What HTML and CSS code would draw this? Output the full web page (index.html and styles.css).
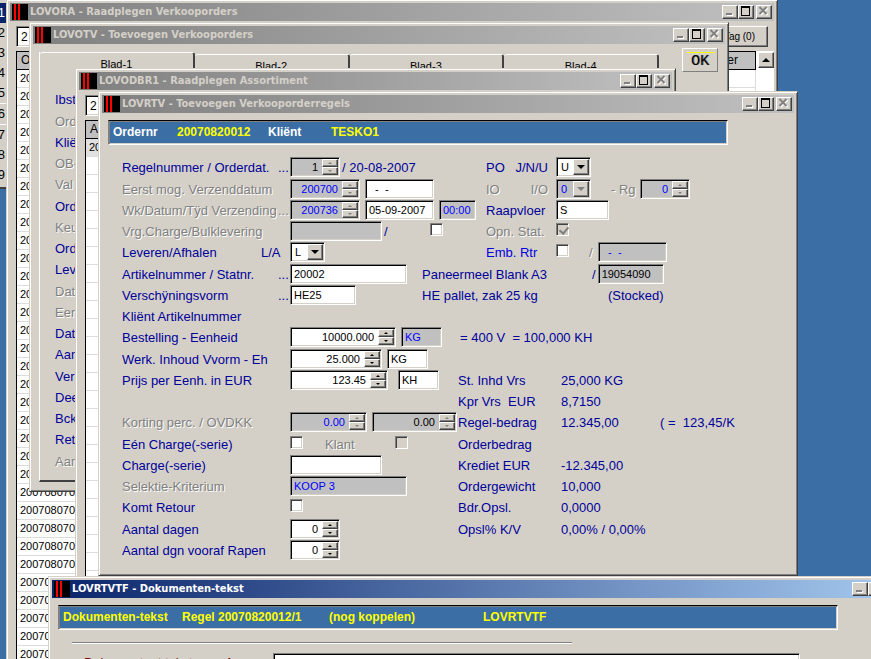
FILE: index.html
```html
<!DOCTYPE html>
<html lang="nl">
<head>
  <meta charset="UTF-8"/>
  <meta name="viewport" content="width=device-width, initial-scale=1.0"/>
  <title>LOVRTV - Toevoegen Verkooporderregels</title>
  <link rel="stylesheet" href="styles.css">
</head>
<body>
<div class="desktop">

  <!-- Menu strip on the left edge -->
  <ol class="menu">
    <li class="active">1</li>
    <li>2</li>
    <li>3</li>
    <li>4</li>
    <li>5</li>
    <li class="sep">6</li>
    <li class="sep">7</li>
    <li>8</li>
    <li>9</li>
  </ol>

  <!-- LOVORA -->
  <section class="window win-orders">
    <header class="titlebar">
      <span class="logo"></span>
      <h2>LOVORA - Raadplegen Verkooporders</h2>
      <div class="winbtns">
        <button type="button" aria-label="Min" disabled><svg width="12" height="10"><path d="M4 8h6v2h-6z" fill="#fff"/><path d="M3 7h6v2h-6z" fill="#808080"/></svg></button>
        <button type="button" aria-label="Max"><svg width="12" height="10"><path d="M2 0h9v10h-9z M3 2v7h7v-7z" fill="#000" fill-rule="evenodd"/></svg></button>
        <button type="button" aria-label="Sluiten" disabled><svg width="12" height="10"><path d="M3.5 2l7 7M10.5 2l-7 7" stroke="#fff" stroke-width="2"/><path d="M2.5 1l7 7M9.5 1l-7 7" stroke="#808080" stroke-width="2"/></svg></button>
      </div>
    </header>
    <div class="toolbar">
      <input class="field search" type="text" value="2" aria-label="Zoek order">
      <button type="button" class="tag">Tag (0)</button>
    </div>
    <div class="list">
      <table class="orders">
        <thead><tr><th>Order</th><th class="last">Order</th></tr></thead>
        <tbody>
          <tr><td>200708070001</td><td></td></tr>
          <tr><td>200708070001</td><td></td></tr>
          <tr><td>200708070001</td><td></td></tr>
          <tr><td>200708070001</td><td></td></tr>
          <tr><td>200708070001</td><td></td></tr>
          <tr><td>200708070001</td><td></td></tr>
          <tr><td>200708070001</td><td></td></tr>
          <tr><td>200708070001</td><td></td></tr>
          <tr><td>200708070001</td><td></td></tr>
          <tr><td>200708070001</td><td></td></tr>
          <tr><td>200708070001</td><td></td></tr>
          <tr><td>200708070001</td><td></td></tr>
          <tr><td>200708070001</td><td></td></tr>
          <tr><td>200708070001</td><td></td></tr>
          <tr><td>200708070001</td><td></td></tr>
          <tr><td>200708070001</td><td></td></tr>
          <tr><td>200708070001</td><td></td></tr>
          <tr><td>200708070001</td><td></td></tr>
          <tr><td>200708070001</td><td></td></tr>
          <tr><td>200708070001</td><td></td></tr>
          <tr><td>200708070001</td><td></td></tr>
          <tr><td>200708070001</td><td></td></tr>
          <tr><td>200708070001</td><td></td></tr>
          <tr><td>200708070001</td><td></td></tr>
          <tr><td>200708070001</td><td></td></tr>
          <tr><td>200708070001</td><td></td></tr>
          <tr><td>200708070001</td><td></td></tr>
          <tr><td>200708070001</td><td></td></tr>
          <tr><td>200708070001</td><td></td></tr>
          <tr><td>200708070001</td><td></td></tr>
          <tr><td>200708070001</td><td></td></tr>
          <tr><td>200708070001</td><td></td></tr>
          <tr><td>200708070001</td><td></td></tr>
        </tbody>
      </table>
      <div class="scrollbar"><button type="button" aria-label="Omhoog"><svg width="14" height="14"><path d="M7 5l4 4h-8z"/></svg></button></div>
    </div>
  </section>

  <!-- LOVOTV -->
  <section class="window win-order">
    <header class="titlebar">
      <span class="logo"></span>
      <h2>LOVOTV - Toevoegen Verkooporders</h2>
      <div class="winbtns">
        <button type="button" aria-label="Min" disabled><svg width="12" height="10"><path d="M4 8h6v2h-6z" fill="#fff"/><path d="M3 7h6v2h-6z" fill="#808080"/></svg></button>
        <button type="button" aria-label="Max"><svg width="12" height="10"><path d="M2 0h9v10h-9z M3 2v7h7v-7z" fill="#000" fill-rule="evenodd"/></svg></button>
        <button type="button" aria-label="Sluiten" disabled><svg width="12" height="10"><path d="M3.5 2l7 7M10.5 2l-7 7" stroke="#fff" stroke-width="2"/><path d="M2.5 1l7 7M9.5 1l-7 7" stroke="#808080" stroke-width="2"/></svg></button>
      </div>
    </header>
    <div class="order-body">
      <div class="tabpane">
        <nav class="tabs">
          <button type="button" class="current">Blad-1</button>
          <button type="button">Blad-2</button>
          <button type="button">Blad-3</button>
          <button type="button">Blad-4</button>
        </nav>
        <ul class="labels">
          <li>Ibst</li>
          <li class="off">Ord</li>
          <li>Klië</li>
          <li class="off">OB-</li>
          <li class="off">Val</li>
          <li>Ord</li>
          <li class="off">Keu</li>
          <li>Ord</li>
          <li>Lev</li>
          <li class="off">Dat</li>
          <li class="off">Eer</li>
          <li>Dat</li>
          <li>Aan</li>
          <li>Ver</li>
          <li>Dee</li>
          <li>Bck</li>
          <li>Ret</li>
          <li class="off">Aan</li>
        </ul>
      </div>
      <button type="button" class="ok">OK</button>
    </div>
  </section>

  <!-- LOVODBR1 -->
  <section class="window win-stock">
    <header class="titlebar">
      <span class="logo"></span>
      <h2>LOVODBR1 - Raadplegen Assortiment</h2>
      <div class="winbtns">
        <button type="button" aria-label="Min" disabled><svg width="12" height="10"><path d="M4 8h6v2h-6z" fill="#fff"/><path d="M3 7h6v2h-6z" fill="#808080"/></svg></button>
        <button type="button" aria-label="Max"><svg width="12" height="10"><path d="M2 0h9v10h-9z M3 2v7h7v-7z" fill="#000" fill-rule="evenodd"/></svg></button>
        <button type="button" aria-label="Sluiten" disabled><svg width="12" height="10"><path d="M3.5 2l7 7M10.5 2l-7 7" stroke="#fff" stroke-width="2"/><path d="M2.5 1l7 7M9.5 1l-7 7" stroke="#808080" stroke-width="2"/></svg></button>
      </div>
    </header>
    <div class="toolbar">
      <input class="field search" type="text" value="2" aria-label="Zoek artikel">
    </div>
    <div class="list empty">
      <table class="orders">
        <thead><tr><th>Art</th></tr></thead>
        <tbody><tr class="selected"><td>20</td></tr></tbody>
      </table>
    </div>
  </section>

  <!-- LOVRTV -->
  <section class="window win-line">
    <header class="titlebar">
      <span class="logo"></span>
      <h2>LOVRTV - Toevoegen Verkooporderregels</h2>
      <div class="winbtns">
        <button type="button" aria-label="Min" disabled><svg width="12" height="10"><path d="M4 8h6v2h-6z" fill="#fff"/><path d="M3 7h6v2h-6z" fill="#808080"/></svg></button>
        <button type="button" aria-label="Max"><svg width="12" height="10"><path d="M2 0h9v10h-9z M3 2v7h7v-7z" fill="#000" fill-rule="evenodd"/></svg></button>
        <button type="button" aria-label="Sluiten" disabled><svg width="12" height="10"><path d="M3.5 2l7 7M10.5 2l-7 7" stroke="#fff" stroke-width="2"/><path d="M2.5 1l7 7M9.5 1l-7 7" stroke="#808080" stroke-width="2"/></svg></button>
      </div>
    </header>
    <div class="infobar order-info">
      <b class="white">Ordernr</b><b>20070820012</b><b class="white">Kliënt</b><b>TESKO1</b>
    </div>

    <form class="form">
      <div class="row head">
        <label for="regel">Regelnummer / Orderdat. <i>...</i></label>
        <div class="cell">
          <span class="field spin w50 off"><input id="regel" value="1" disabled><span class="arrows"><button type="button" class="up" aria-label="+" disabled></button><button type="button" class="down" aria-label="-" disabled></button></span></span>
          <span class="after">/ 20-08-2007</span>
        </div>
        <label for="po">PO <span>J/N/U</span></label>
        <div class="cell"><span class="field combo"><select id="po"><option>U</option></select><span class="drop"></span></span></div>
      </div>
      <div class="row head">
        <label class="off" for="eerst">Eerst mog. Verzenddatum</label>
        <div class="cell g5">
          <span class="field spin w70 off blue"><input id="eerst" value="200700" disabled><span class="arrows"><button type="button" class="up" aria-label="+" disabled></button><button type="button" class="down" aria-label="-" disabled></button></span></span>
          <input class="field w69" type="text" value="  -  -" aria-label="Datum">
        </div>
        <label class="off" for="io">IO <span>I/O</span></label>
        <div class="cell">
          <span class="field combo off blue"><select id="io" disabled><option>0</option></select><span class="drop"></span></span>
          <label class="off rg" for="rg">- Rg</label>
          <span class="field spin w50 off blue"><input id="rg" value="0" disabled><span class="arrows"><button type="button" class="up" aria-label="+" disabled></button><button type="button" class="down" aria-label="-" disabled></button></span></span>
        </div>
      </div>
      <div class="row head">
        <label class="off" for="week">Wk/Datum/Tÿd Verzending <i>...</i></label>
        <div class="cell g5">
          <span class="field spin w70 off blue"><input id="week" value="200736" disabled><span class="arrows"><button type="button" class="up" aria-label="+" disabled></button><button type="button" class="down" aria-label="-" disabled></button></span></span>
          <input class="field w69" type="text" value="05-09-2007" aria-label="Datum">
          <input class="field w37 off blue" type="text" value="00:00" aria-label="Tijd" disabled>
        </div>
        <label for="vloer">Raapvloer</label>
        <div class="cell"><input class="field w53" type="text" id="vloer" value="S"></div>
      </div>
      <div class="row head">
        <label class="off" for="vrg">Vrg.Charge/Bulklevering</label>
        <div class="cell bulk">
          <input class="field w92 off" type="text" id="vrg" disabled>
          <span class="after">/</span>
          <input type="checkbox" aria-label="Bulklevering">
        </div>
        <label class="off" for="opn">Opn. Stat.</label>
        <div class="cell"><input type="checkbox" id="opn" checked disabled></div>
      </div>
      <div class="row head">
        <label for="la">Leveren/Afhalen <span class="la">L/A</span></label>
        <div class="cell"><span class="field combo"><select id="la"><option>L</option></select><span class="drop"></span></span></div>
        <label class="bright" for="emb">Emb. Rtr</label>
        <div class="cell">
          <input type="checkbox" id="emb">
          <span class="off slash">/</span>
          <input class="field w69 off blue" type="text" value="  -  -" aria-label="Retourdatum" disabled>
        </div>
      </div>
      <div class="row article">
        <label for="art">Artikelnummer / Statnr. <i>...</i></label>
        <div class="cell"><input class="field w117" type="text" id="art" value="20002"></div>
        <span>Paneermeel Blank A3</span>
        <div class="cell stat">
          <span class="after">/</span>
          <input class="field w66 off" type="text" value="19054090" aria-label="Statnr" disabled>
        </div>
      </div>
      <div class="row article">
        <label for="vorm">Verschÿningsvorm <i>...</i></label>
        <div class="cell"><input class="field w66" type="text" id="vorm" value="HE25"></div>
        <span>HE pallet, zak 25 kg</span>
        <span class="stocked">(Stocked)</span>
      </div>
      <div class="row">
        <span>Kliënt Artikelnummer</span>
      </div>
      <div class="row totals">
        <label for="bestel">Bestelling - Eenheid</label>
        <div class="cell g5">
          <span class="field spin w106"><input id="bestel" value="10000.000"><span class="arrows"><button type="button" class="up" aria-label="+"></button><button type="button" class="down" aria-label="-"></button></span></span>
          <input class="field w41 off blue" type="text" value="KG" aria-label="Eenheid" disabled>
        </div>
        <span class="pre wide">= 400 V  = 100,000 KH</span>
      </div>
      <div class="row totals">
        <label for="inhoud">Werk. Inhoud Vvorm - Eh</label>
        <div class="cell g5">
          <span class="field spin w92"><input id="inhoud" value="25.000"><span class="arrows"><button type="button" class="up" aria-label="+"></button><button type="button" class="down" aria-label="-"></button></span></span>
          <input class="field w41" type="text" value="KG" aria-label="Eenheid">
        </div>
      </div>
      <div class="row totals">
        <label for="prijs">Prijs per Eenh. in EUR</label>
        <div class="cell g10">
          <span class="field spin w98"><input id="prijs" value="123.45"><span class="arrows"><button type="button" class="up" aria-label="+"></button><button type="button" class="down" aria-label="-"></button></span></span>
          <input class="field w41" type="text" value="KH" aria-label="Eenheid">
        </div>
        <span>St. Inhd Vrs</span><span>25,000 KG</span>
      </div>
      <div class="row totals">
        <span></span><span></span>
        <span class="pre">Kpr Vrs  EUR</span><span>8,7150</span>
      </div>
      <div class="row totals">
        <label class="off" for="korting">Korting perc. / OVDKK</label>
        <div class="cell g5">
          <span class="field spin w77 off blue"><input id="korting" value="0.00" disabled><span class="arrows"><button type="button" class="up" aria-label="+" disabled></button><button type="button" class="down" aria-label="-" disabled></button></span></span>
          <span class="field spin w85 off"><input value="0.00" aria-label="OVDKK" disabled><span class="arrows"><button type="button" class="up" aria-label="+" disabled></button><button type="button" class="down" aria-label="-" disabled></button></span></span>
        </div>
        <span>Regel-bedrag</span><span>12.345,00</span><span class="pre">( =  123,45/K</span>
      </div>
      <div class="row totals">
        <label for="een">Eén Charge(-serie)</label>
        <div class="cell">
          <input type="checkbox" id="een">
          <label class="off klant" for="klant">Klant</label>
          <input type="checkbox" id="klant" disabled>
        </div>
        <span>Orderbedrag</span>
      </div>
      <div class="row totals">
        <label for="charge">Charge(-serie)</label>
        <div class="cell"><input class="field w92" type="text" id="charge"></div>
        <span>Krediet EUR</span><span>-12.345,00</span>
      </div>
      <div class="row totals">
        <label class="off" for="selektie">Selektie-Kriterium</label>
        <div class="cell"><input class="field w117 off blue" type="text" id="selektie" value="KOOP 3" disabled></div>
        <span>Ordergewicht</span><span>10,000</span>
      </div>
      <div class="row totals">
        <label for="retour">Komt Retour</label>
        <div class="cell"><input type="checkbox" id="retour"></div>
        <span>Bdr.Opsl.</span><span>0,0000</span>
      </div>
      <div class="row totals">
        <label for="dagen">Aantal dagen</label>
        <div class="cell"><span class="field spin w50"><input id="dagen" value="0"><span class="arrows"><button type="button" class="up" aria-label="+"></button><button type="button" class="down" aria-label="-"></button></span></span></div>
        <span>Opsl% K/V</span><span>0,00% / 0,00%</span>
      </div>
      <div class="row totals">
        <label for="rapen">Aantal dgn vooraf Rapen</label>
        <div class="cell"><span class="field spin w50"><input id="rapen" value="0"><span class="arrows"><button type="button" class="up" aria-label="+"></button><button type="button" class="down" aria-label="-"></button></span></span></div>
      </div>
    </form>
  </section>

  <!-- LOVRTVTF -->
  <section class="window win-text">
    <header class="titlebar focus">
      <span class="logo"></span>
      <h2>LOVRTVTF - Dokumenten-tekst</h2>
      <div class="winbtns">
        <button type="button" aria-label="Min" disabled><svg width="12" height="10"><path d="M4 8h6v2h-6z" fill="#fff"/><path d="M3 7h6v2h-6z" fill="#808080"/></svg></button>
        <button type="button" aria-label="Max"></button>
        <button type="button" aria-label="Sluiten"></button>
      </div>
    </header>
    <div class="infobar text-info">
      <b>Dokumenten-tekst</b><b>Regel 20070820012/1</b><b>(nog koppelen)</b><b>LOVRTVTF</b>
    </div>
    <hr>
    <div class="textrow">
      <label for="tekst">Dokumentent.tekst <span>1</span></label>
      <input class="field" type="text" id="tekst">
    </div>
  </section>

</div>
</body>
</html>
```
FILE: styles.css
```css
:root {
  --face: #d4d0c8;
  --shadow: #808080;
  --dark: #404040;
  --desktop: #3a6ea5;
  --navy: #000099;
  --off: #c0c0c0;
}

* {
  box-sizing: border-box;
}

body {
  margin: 0;
  background: var(--desktop);
  font-family: "Liberation Sans", Arial, sans-serif;
  font-size: 13px;
  line-height: 20px;
  color: var(--navy);
}

.desktop {
  position: relative;
  height: 100vh;
  overflow: hidden;
}

input,
select,
button {
  font-family: inherit;
  font-size: 11px;
  margin: 0;
  padding: 0;
  border: 0;
  border-radius: 0;
  color: #000;
}

ol,
ul {
  list-style: none;
  margin: 0;
  padding: 0;
}

/* menu strip */
.menu {
  width: 6px;
  padding: 3px 0 2px;
  background: var(--face);
  border-bottom: 2px solid var(--dark);
  color: #000;
}

.menu li {
  display: flex;
  justify-content: flex-end;
  padding-right: 1px;
}

.menu .active {
  background: #0a246a;
  color: #fff;
}

.menu .sep {
  border-top: 1px solid #fff;
}

/* windows */
.window {
  position: absolute;
  padding: 3px;
  background: var(--face);
  border: 1px solid;
  border-color: var(--face) var(--dark) var(--dark) var(--face);
  box-shadow: inset 1px 1px #fff, inset -1px -1px var(--shadow);
}

.win-orders {
  left: 6px;
  top: -1px;
  width: 772px;
}

.win-order {
  left: 29px;
  top: 22px;
  width: 700px;
}

.win-stock {
  left: 75px;
  top: 68px;
  width: 601px;
}

.win-line {
  left: 98px;
  top: 91px;
  width: 700px;
}

.win-text {
  left: 48px;
  top: 576px;
  width: 860px;
}

.titlebar {
  display: flex;
  align-items: center;
  height: 18px;
  padding: 0 2px;
  background: linear-gradient(to right, #808080, #c0c0c0);
  color: var(--face);
}

.titlebar.focus {
  background: linear-gradient(to right, #0a246a, #a6caf0);
  color: #fff;
}

.titlebar h2 {
  flex: 1;
  margin: 0 0 0 2px;
  font: bold 11px/18px "DejaVu Sans Condensed", "DejaVu Sans", sans-serif;
}

.logo {
  width: 16px;
  height: 16px;
  background: linear-gradient(to right, #000 2px, #f00 2px 4px, #000 4px 6px, #f00 6px 8px, #000 8px);
}

.winbtns {
  display: flex;
}

.winbtns button {
  width: 16px;
  height: 14px;
  display: flex;
}

.winbtns button:last-child {
  margin-left: 2px;
}

.winbtns button,
.tag,
.scrollbar button,
.arrows button,
.drop {
  background: var(--face);
  border: 1px solid;
  border-color: #fff var(--dark) var(--dark) #fff;
  box-shadow: inset -1px -1px var(--shadow);
}

/* sunken boxes */
.field {
  height: 20px;
  border: 1px solid;
  border-color: var(--shadow) #fff #fff var(--shadow);
  box-shadow: inset 1px 1px #000, inset -1px -1px var(--face);
  background: #fff;
  padding: 1px 3px;
  white-space: pre;
}

.field.off {
  background: var(--off);
  opacity: 1;
}

.field.blue,
.field.blue input,
.field.blue select {
  color: #00f;
}

.w37 { width: 37px; }
.w41 { width: 41px; }
.w50 { width: 50px; }
.w53 { width: 53px; }
.w66 { width: 66px; }
.w69 { width: 69px; }
.w70 { width: 70px; }
.w77 { width: 77px; }
.w85 { width: 85px; }
.w92 { width: 92px; }
.w98 { width: 98px; }
.w106 { width: 106px; }
.w117 { width: 117px; }

.spin,
.combo {
  display: flex;
  padding: 1px;
}

.spin input {
  flex: 1;
  min-width: 0;
  padding-right: 4px;
  background: none;
  text-align: right;
}

.arrows {
  display: flex;
  flex-direction: column;
  width: 16px;
}

.arrows button {
  display: flex;
  align-items: center;
  justify-content: center;
  height: 8px;
}

.up::before,
.down::before {
  content: "";
  border: 2px solid transparent;
}

.up::before {
  border-top: 0;
  border-bottom-color: #000;
}

.down::before {
  border-bottom: 0;
  border-top-color: #000;
}

.up:disabled::before {
  border-bottom-color: var(--shadow);
}

.down:disabled::before {
  border-top-color: var(--shadow);
}

.combo {
  width: 35px;
}

.combo select {
  flex: 1;
  min-width: 0;
  padding-left: 3px;
  appearance: none;
  background: none;
  opacity: 1;
}

.drop {
  display: flex;
  align-items: center;
  justify-content: center;
  width: 16px;
}

.drop::before {
  content: "";
  border: 4px solid transparent;
  border-top-color: #000;
  border-bottom: 0;
}

.combo.off .drop::before {
  border-top-color: var(--shadow);
}

input[type="checkbox"] {
  appearance: none;
  width: 13px;
  height: 13px;
  margin-top: 2px;
  background: #fff;
  border: 1px solid;
  border-color: var(--shadow) #fff #fff var(--shadow);
  box-shadow: inset 1px 1px var(--dark), inset -1px -1px var(--face);
}

input[type="checkbox"]:disabled {
  background: var(--face);
}

input[type="checkbox"]:checked::before {
  content: "";
  display: block;
  width: 4px;
  height: 7px;
  margin: 1px 0 0 4px;
  border: solid var(--shadow);
  border-width: 0 2px 2px 0;
  transform: rotate(40deg);
}

/* blue information bars */
.infobar {
  display: flex;
  height: 25px;
  margin: 7px 0 0 6px;
  padding: 0 4px;
  font-size: 12px;
  line-height: 23px;
  background: var(--desktop);
  border: 1px solid;
  border-color: #000 #fff #fff var(--shadow);
  box-shadow: inset 1px 1px var(--shadow), inset -1px -1px var(--face);
  color: #ff0;
}

.infobar .white {
  color: #fff;
}

.order-info {
  width: 620px;
}

.order-info b:nth-child(1) { width: 64px; }
.order-info b:nth-child(2) { width: 91px; }
.order-info b:nth-child(3) { width: 63px; }

.text-info {
  width: 780px;
}

.text-info b:nth-child(1) { width: 119px; }
.text-info b:nth-child(2) { width: 147px; }
.text-info b:nth-child(3) { width: 154px; }

/* order line form */
.form {
  padding: 12px 0 11px 20px;
  line-height: 22px;
}

.row {
  display: grid;
  height: 21px;
  white-space: nowrap;
}

/* one extra pixel of leading every four rows */
.row:nth-child(4n+2),
.labels li:nth-child(4n+2) {
  margin-top: 1px;
}

.row.head {
  grid-template-columns: 168px 196px 70px 1fr;
}

.row.article {
  grid-template-columns: 168px 132px 168px 1fr;
}

.row.totals {
  grid-template-columns: 168px 168px 103px 99px 1fr;
}

.row label {
  display: flex;
  justify-content: space-between;
}

.row label i {
  width: 12px;
  font-style: normal;
}

.row.head > label:nth-child(3) {
  padding-right: 8px;
}

.row .la {
  width: 29px;
}

.cell {
  display: flex;
  align-items: flex-start;
}

.cell.g5 {
  gap: 5px;
}

.cell.g10 {
  gap: 10px;
}

.after {
  padding-left: 2px;
}

.bulk input[type="checkbox"] {
  margin-left: 42px;
}

.row .rg {
  width: 49px;
  padding-left: 20px;
}

.slash {
  width: 29px;
  padding-left: 20px;
}

.stat {
  gap: 2px;
}

.stocked {
  padding-left: 18px;
}

.row .klant {
  width: 92px;
  padding-left: 22px;
}

.pre {
  white-space: pre;
}

.wide {
  padding-left: 2px;
}

label.off,
span.slash,
li.off {
  color: var(--shadow);
  text-shadow: 1px 1px #fff;
}

.bright {
  color: #0000e0;
}

/* background lists */
.toolbar {
  display: flex;
  justify-content: space-between;
  padding: 5px 6px 0;
}

.search {
  width: 100px;
  height: 21px;
  padding-left: 4px;
  font-size: 12px;
}

.tag {
  width: 60px;
  height: 21px;
  padding-right: 12px;
  font-size: 10px;
  text-align: right;
}

.list {
  display: flex;
  margin: 4px 0 0 6px;
}

.orders {
  flex: 1;
  border-collapse: separate;
  border-spacing: 0;
  border-left: 1px solid #000;
  background: #fff;
  color: #000;
  font-size: 11px;
  line-height: 17px;
}

.orders th {
  height: 19px;
  padding: 0 4px;
  background: var(--off);
  border-top: 1px solid #000;
  border-bottom: 1px solid #000;
  font-size: 12px;
  font-weight: normal;
  text-align: left;
}

.orders td {
  height: 18px;
  padding: 0 3px;
  border-bottom: 1px solid #dcdcdc;
}

.orders .last {
  padding-right: 17px;
  border-right: 1px solid #000;
  text-align: right;
}

.orders td:nth-child(2) {
  border-right: 1px solid #dcdcdc;
}

.scrollbar {
  width: 18px;
  padding: 1px 0 0 2px;
  background: #fff;
}

.scrollbar button {
  display: flex;
  width: 16px;
  height: 16px;
}

.orders .selected td {
  background: #e0e0e0;
}

.list.empty {
  height: 460px;
  align-items: flex-start;
  background: repeating-linear-gradient(to bottom, #fff 0 17px, #dcdcdc 17px 18px) 0 1px;
  border-left: 1px solid #000;
}

.empty .orders {
  border-left: 0;
}

/* order header with tabs */
.order-body {
  display: flex;
  align-items: flex-start;
  justify-content: space-between;
  padding: 4px 7px 6px 6px;
}

.tabpane {
  margin-top: 4px;
  width: 620px;
  border-left: 1px solid #fff;
  border-bottom: 2px solid var(--dark);
}

.tabs {
  display: flex;
  align-items: flex-end;
}

.tabs button {
  flex: 1;
  height: 20px;
  padding-top: 2px;
  background: var(--face);
  border-top: 1px solid #fff;
  border-right: 2px solid var(--dark);
  border-radius: 3px 3px 0 0;
}

.tabs .current {
  height: 22px;
  padding-top: 0;
}

.labels {
  padding: 16px 0 7px 15px;
}

.labels li {
  height: 21px;
}

.ok {
  width: 36px;
  height: 24px;
  padding-top: 3px;
  background: linear-gradient(#ff0, #ff0) 4px 3px / 28px 1px no-repeat var(--face);
  border: 1px solid;
  border-color: #fff var(--shadow) var(--shadow) #fff;
  font: 15px/17px "Liberation Mono", monospace;
  text-shadow: 1px 0 #808080;
}

/* document text window */
hr {
  width: 500px;
  margin: 12px 0 0 20px;
  border: 0;
  border-top: 1px solid var(--shadow);
  border-bottom: 1px solid #fff;
}

.textrow {
  display: flex;
  margin: 9px 0 0 32px;
  color: #800000;
}

.textrow label {
  display: flex;
  justify-content: space-between;
  width: 189px;
  padding-right: 40px;
}

.textrow .field {
  width: 527px;
}
```
